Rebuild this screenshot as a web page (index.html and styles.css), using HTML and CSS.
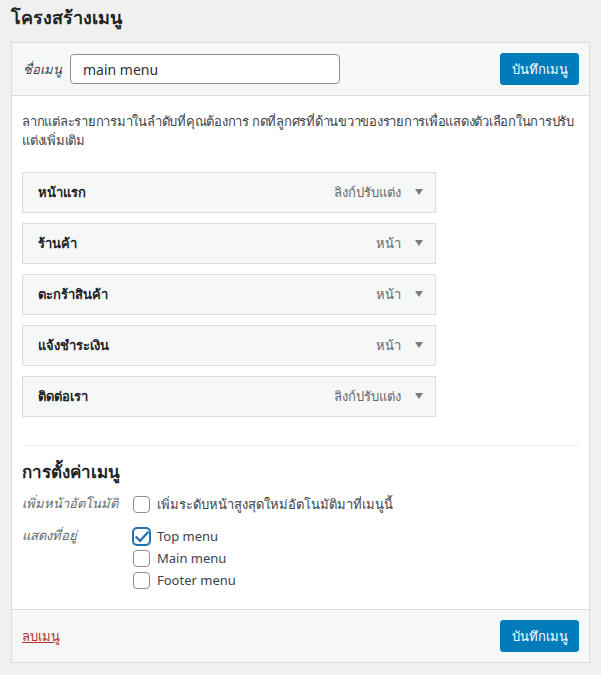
FILE: index.html
```html
<!DOCTYPE html>
<html lang="th">
<head>
<meta charset="utf-8">
<link rel="stylesheet" href="styles.css">
</head>
<body>
<h2 class="page-title">โครงสร้างเมนู</h2>
<div class="menu-box">
  <div class="box-header">
    <label class="name-label">ชื่อเมนู</label>
    <input class="name-input" type="text" value="main menu">
    <button class="btn-primary">บันทึกเมนู</button>
  </div>
  <div class="box-body">
    <p class="desc">ลากแต่ละรายการมาในลำดับที่คุณต้องการ กดที่ลูกศรที่ด้านขวาของรายการเพื่อแสดงตัวเลือกในการปรับแต่งเพิ่มเติม</p>
    <ul class="items">
      <li class="item"><span class="item-title">หน้าแรก</span><span class="item-type">ลิงก์ปรับแต่ง</span><span class="arrow"></span></li>
      <li class="item"><span class="item-title">ร้านค้า</span><span class="item-type">หน้า</span><span class="arrow"></span></li>
      <li class="item"><span class="item-title">ตะกร้าสินค้า</span><span class="item-type">หน้า</span><span class="arrow"></span></li>
      <li class="item"><span class="item-title">แจ้งชำระเงิน</span><span class="item-type">หน้า</span><span class="arrow"></span></li>
      <li class="item"><span class="item-title">ติดต่อเรา</span><span class="item-type">ลิงก์ปรับแต่ง</span><span class="arrow"></span></li>
    </ul>
    <div class="settings">
      <h3 class="settings-title">การตั้งค่าเมนู</h3>
      <div class="setting-row">
        <div class="setting-label">เพิ่มหน้าอัตโนมัติ</div>
        <div class="setting-options">
          <label class="opt"><span class="cb"></span>เพิ่มระดับหน้าสูงสุดใหม่อัตโนมัติมาที่เมนูนี้</label>
        </div>
      </div>
      <div class="setting-row">
        <div class="setting-label">แสดงที่อยู่</div>
        <div class="setting-options">
          <label class="opt"><span class="cb checked"><svg viewBox="0 0 20 20" width="20" height="20"><path d="M4.5 10.2l3.6 3.6 7.6-8.3" fill="none" stroke="#2271b1" stroke-width="2.2" stroke-linecap="square"/></svg></span>Top menu</label>
          <label class="opt"><span class="cb"></span>Main menu</label>
          <label class="opt"><span class="cb"></span>Footer menu</label>
        </div>
      </div>
    </div>
  </div>
  <div class="box-footer">
    <a class="delete" href="#">ลบเมนู</a>
    <button class="btn-primary">บันทึกเมนู</button>
  </div>
</div>
</body>
</html>
```
FILE: styles.css
```css
* { box-sizing: border-box; }
html, body { margin: 0; padding: 0; }
body {
  background: #f0f0f1;
  font-family: "Noto Sans", "Liberation Sans", sans-serif;
  font-size: 13px;
  color: #3c434a;
  padding: 0 11px;
}
.page-title {
  margin: 0;
  padding: 4px 0 12px;
  font-size: 18px;
  font-weight: 700;
  color: #1d2327;
  line-height: 26px;
}
.menu-box {
  border: 1px solid #dcdcde;
  background: #fff;
}
.box-header {
  background: #f6f7f7;
  border-bottom: 1px solid #dcdcde;
  display: flex;
  align-items: center;
  padding: 10px 10px 10px 11px;
  height: 53px;
}
.name-label {
  font-style: italic;
  width: 47px;
  color: #3c434a;
}
.name-input {
  width: 270px;
  height: 30px;
  border: 1px solid #8c8f94;
  border-radius: 4px;
  padding: 0 12px;
  font-family: inherit;
  font-size: 14px;
  color: #2c3338;
  background: #fff;
}
.btn-primary {
  margin-left: auto;
  background: #007cba;
  color: #fff;
  border: 1px solid #007cba;
  border-radius: 3px;
  height: 32px;
  width: 79px;
  font-family: inherit;
  font-size: 13px;
  padding: 0;
}
.box-body {
  padding: 8px 10px 8px 10px;
}
.desc {
  margin: 0 0 22px;
  line-height: 19px;
  padding-top: 8px;
  letter-spacing: -0.25px;
}
.items {
  list-style: none;
  margin: 0;
  padding: 0;
  width: 414px;
  display: flex;
  flex-direction: column;
  gap: 10px;
}
.item {
  height: 41px;
  border: 1px solid #dcdcde;
  background: #f6f7f7;
  display: flex;
  align-items: center;
  padding: 0 12px 0 15px;
}
.item-title {
  font-weight: 700;
  color: #1d2327;
  flex: 1;
}
.item-type {
  color: #646970;
  font-size: 13px;
}
.arrow {
  width: 0;
  height: 0;
  border-left: 4.5px solid transparent;
  border-right: 4.5px solid transparent;
  border-top: 6px solid #787c82;
  margin-left: 14px;
  margin-top: -2px;
}
.settings {
  margin-top: 28px;
  border-top: 1px solid #f0f0f1;
  padding-top: 13px;
}
.settings-title {
  margin: 0 0 8px;
  font-size: 17px;
  font-weight: 700;
  color: #1d2327;
  line-height: 26px;
}
.setting-row {
  display: flex;
  margin-bottom: 10px;
}
.setting-label {
  width: 111px;
  font-style: italic;
  color: #646970;
  line-height: 22px;
  margin-top: -1px;
}
.setting-options {
  display: flex;
  flex-direction: column;
}
.opt {
  display: flex;
  align-items: center;
  height: 22px;
  color: #3c434a;
}
.cb {
  width: 17px;
  height: 17px;
  border: 1px solid #8c8f94;
  border-radius: 4px;
  background: #fff;
  margin-right: 7px;
  display: inline-flex;
  align-items: center;
  justify-content: center;
  position: relative;
}
.cb.checked {
  border-color: #2271b1;
  box-shadow: 0 0 0 1px #2271b1;
}
.cb svg { position: absolute; left: -2px; top: -2px; }
.box-footer {
  background: #f6f7f7;
  border-top: 1px solid #dcdcde;
  display: flex;
  align-items: center;
  padding: 0 10px 0 10px;
  height: 53px;
}
.delete {
  color: #b32d2e;
  text-decoration: underline;
}
```
